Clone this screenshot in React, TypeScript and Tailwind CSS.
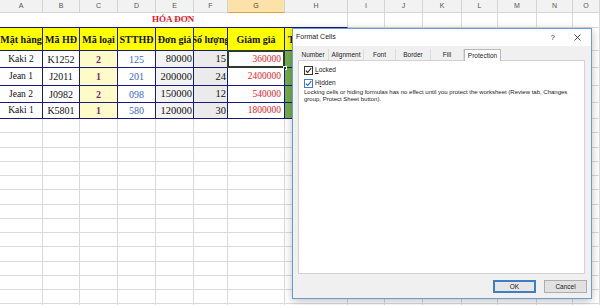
import React from "react";

const colW = [43, 37, 38, 38, 38, 34, 57, 63, 37, 38, 39, 36, 39, 36, 27];
const letters = ["A", "B", "C", "D", "E", "F", "G", "H", "I", "J", "K", "L", "M", "N", "O"];
const emptyHeights = [14, 15, 14, 14, 14, 15, 14, 14, 14, 15, 14, 14, 14, 15];

const headerRow = ["Mặt hàng", "Mã HĐ", "Mã loại", "STTHĐ", "Đơn giá", "Số lượng", "Giảm giá", "Thành tiền"];

const data = [
  ["Kaki 2", "K1252", "2", "125", "80000", "15", "360000"],
  ["Jean 1", "J2011", "1", "201", "200000", "24", "2400000"],
  ["Jean 2", "J0982", "2", "098", "150000", "12", "540000"],
  ["Kaki 1", "K5801", "1", "580", "120000", "30", "1800000"],
];
const dataH = [17, 18, 17, 16];

const serif = { fontFamily: '"Liberation Serif", "Times New Roman", serif' };
const sans = { fontFamily: '"Liberation Sans", Arial, sans-serif' };

function GreyTail({ from }: { from: number }) {
  return (
    <>
      {colW.slice(from).map((w, i) => (
        <div key={i} className="box-border shrink-0 border-r border-b border-[#dadada]" style={{ width: w }} />
      ))}
    </>
  );
}

function Check({ blue }: { blue?: boolean }) {
  return (
    <div
      className={`box-border w-[9px] h-[9px] border bg-white flex items-center justify-center ${
        blue ? "border-[#3a7bd5]" : "border-[#333]"
      }`}
    >
      <svg width="7" height="7" viewBox="0 0 7 7">
        <path d="M0.8 3.6 L2.7 5.5 L6.2 1.2" fill="none" stroke={blue ? "#1f5fb8" : "#222"} strokeWidth="1.1" />
      </svg>
    </div>
  );
}

export default function App() {
  const tabs = [
    { t: "Number", w: 31 },
    { t: "Alignment", w: 35 },
    { t: "Font", w: 32 },
    { t: "Border", w: 35 },
    { t: "Fill", w: 33 },
    { t: "Protection", w: 37, active: true },
  ];
  return (
    <div className="relative w-[600px] h-[305px] overflow-hidden bg-white">
      {/* column headers */}
      <div className="flex h-[13px] bg-[#f2f2f2]" style={sans}>
        {colW.map((w, i) => (
          <div
            key={i}
            className={`box-border shrink-0 border-r border-b flex items-center justify-center text-[7px] ${
              i === 6
                ? "bg-[#fbe2a8] border-b-[#e0a040] border-r-[#d4d4d4] text-[#444]"
                : "border-[#d4d4d4] text-[#555]"
            }`}
            style={{ width: w }}
          >
            {letters[i]}
          </div>
        ))}
      </div>

      {/* title row */}
      <div className="flex h-[15px]" style={serif}>
        <div className="box-border shrink-0 w-[285px] border-b border-[#1a1a7a] flex items-center pl-[152px] text-[9px] font-bold text-[#e8141c]">
          HÓA ĐƠN
        </div>
        <div className="box-border shrink-0 w-[63px] border-r border-b border-r-[#dadada] border-b-[#1a1a7a]" />
        <GreyTail from={8} />
      </div>

      {/* table header row */}
      <div className="flex h-[23px]" style={serif}>
        {headerRow.map((t, i) => (
          <div
            key={i}
            className={`box-border shrink-0 overflow-hidden whitespace-nowrap border-r border-b border-[#1a1a7a] bg-[#ffff00] flex items-center text-[10px] font-bold text-[#111] ${
              i === 7 ? "pl-[3px] justify-start" : "justify-center"
            }`}
            style={{ width: colW[i] }}
          >
            {t}
          </div>
        ))}
        <GreyTail from={8} />
      </div>

      {/* data rows */}
      {data.map((r, ri) => (
        <div key={ri} className="flex" style={{ ...serif, height: dataH[ri] }}>
          <div className="box-border shrink-0 w-[43px] border-r border-b border-[#1a1a7a] flex items-center justify-center text-[9.5px] text-[#111]">
            {r[0]}
          </div>
          <div className="box-border shrink-0 w-[37px] border-r border-b border-[#1a1a7a] flex items-center justify-center text-[10px] text-[#111]">
            {r[1]}
          </div>
          <div className="box-border shrink-0 w-[38px] border-r border-b border-[#1a1a7a] bg-[#fffbc8] flex items-center justify-center text-[10px] font-bold text-[#7a2a78]">
            {r[2]}
          </div>
          <div className="box-border shrink-0 w-[38px] border-r border-b border-[#1a1a7a] flex items-center justify-center text-[10px] text-[#3a66c8]">
            {r[3]}
          </div>
          <div className="box-border shrink-0 w-[38px] border-r border-b border-[#1a1a7a] bg-[#f3f3f3] flex items-center justify-end pr-[1px] text-[10.5px] text-[#111]">
            {r[4]}
          </div>
          <div className="box-border shrink-0 w-[34px] border-r border-b border-[#1a1a7a] bg-[#ebebeb] flex items-center justify-end pr-[1px] text-[10.5px] text-[#111]">
            {r[5]}
          </div>
          <div className="relative box-border shrink-0 w-[57px] border-r border-b border-[#1a1a7a] flex items-center justify-end pr-[3px] text-[9.5px] text-[#e3232b]">
            {r[6]}
            {ri === 0 && (
              <>
                <div className="absolute -left-[1px] -top-[1px] -right-[1px] -bottom-[1px] border-2 border-[#2d3b2d]" />
                <div className="absolute -right-[3px] -bottom-[3px] w-[4px] h-[4px] bg-[#2d3b2d] border border-white" />
              </>
            )}
          </div>
          <div className="box-border shrink-0 w-[63px] border-r border-b border-[#1a1a7a] bg-[#74ad4a]" />
          <GreyTail from={8} />
        </div>
      ))}

      {/* empty rows */}
      {emptyHeights.map((h, ri) => (
        <div key={ri} className="flex" style={{ height: h }}>
          <GreyTail from={0} />
        </div>
      ))}

      {/* Format Cells dialog */}
      <div
        className="absolute left-[292px] top-[28px] w-[300px] h-[271px] box-border border border-[#6c9bd4] bg-[#f0f0f0] shadow-[0_2px_8px_rgba(0,0,0,0.25)] flex flex-col"
        style={sans}
      >
        <div className="h-[17px] bg-white flex items-center pl-[3px] pr-[10px] text-[7px] text-[#222]">
          <span>Format Cells</span>
          <span className="ml-auto text-[8px] text-[#333]">?</span>
          <svg className="ml-[19px]" width="7" height="7" viewBox="0 0 7 7">
            <path d="M0.5 0.5 L6.5 6.5 M6.5 0.5 L0.5 6.5" stroke="#333" strokeWidth="0.9" />
          </svg>
        </div>
        <div className="flex px-[5px] pt-[2px] h-[14px] items-end">
          {tabs.map((t, i) => (
            <div
              key={i}
              className={`box-border shrink-0 flex items-center justify-center text-[6.5px] text-[#222] ${
                t.active
                  ? "h-[12px] bg-white border border-b-0 border-[#b8b8b8] relative top-[1px] z-10"
                  : "h-[11px] border-r border-[#dcdcdc]"
              }`}
              style={{ width: t.w }}
            >
              {t.t}
            </div>
          ))}
        </div>
        <div className="mx-[5px] mr-[6px] h-[214px] box-border bg-white border border-[#d2d2d2] pl-[5px] pt-[4px] text-[6px] text-[#222]">
          <div className="flex items-center gap-[2px] h-[10px]">
            <Check />
            <span className="text-[6.5px]">
              <span className="underline">L</span>ocked
            </span>
          </div>
          <div className="flex items-center gap-[2px] h-[10px] mt-[3px]">
            <Check blue />
            <span className="text-[6.5px]">
              H<span className="underline">i</span>dden
            </span>
          </div>
          <div className="mt-[1px] leading-[7px] whitespace-nowrap">
            Locking cells or hiding formulas has no effect until you protect the worksheet (Review tab, Changes
            <br />
            group, Protect Sheet button).
          </div>
        </div>
        <div className="flex justify-end gap-[8px] pr-[4px] pt-[6px]">
          <div className="box-border w-[43px] h-[13px] border-2 border-[#3d7fc0] bg-[#e6e6e6] flex items-center justify-center text-[6.5px] text-[#222]">
            OK
          </div>
          <div className="box-border w-[43px] h-[13px] border border-[#adadad] bg-[#e1e1e1] flex items-center justify-center text-[6.5px] text-[#222]">
            Cancel
          </div>
        </div>
      </div>
    </div>
  );
}
